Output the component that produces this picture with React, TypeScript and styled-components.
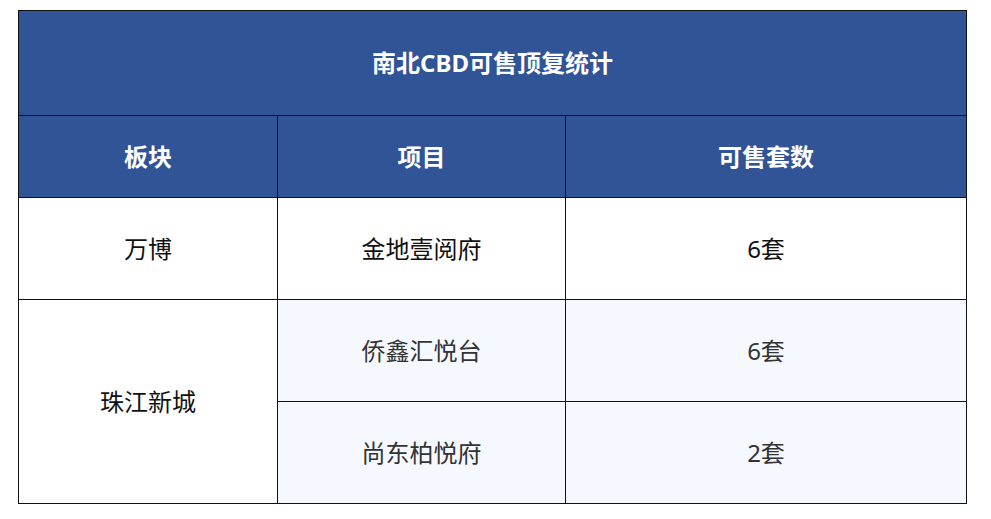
import React from 'react';
import styled, { createGlobalStyle } from 'styled-components';

type Row = {
  area?: string;
  span?: number;
  project: string;
  count: string;
  striped?: boolean;
};

const rows: Row[] = [
  { area: '万博', span: 1, project: '金地壹阅府', count: '6套' },
  { area: '珠江新城', span: 2, project: '侨鑫汇悦台', count: '6套', striped: true },
  { project: '尚东柏悦府', count: '2套', striped: true },
];

const GlobalStyle = createGlobalStyle`
  body {
    margin: 0;
    background: #fff;
    font-family: "Noto Sans", "Noto Sans CJK SC", sans-serif;
  }
`;

export default function App() {
  return (
    <>
      <GlobalStyle />
      <Page>
        <Table>
          <colgroup>
            <col style={{ width: 259 }} />
            <col style={{ width: 288 }} />
            <col style={{ width: 401 }} />
          </colgroup>
          <thead>
            <TitleRow>
              <HeadCell colSpan={3}>南北CBD可售顶复统计</HeadCell>
            </TitleRow>
            <HeaderRow>
              <HeadCell>板块</HeadCell>
              <HeadCell>项目</HeadCell>
              <HeadCell>可售套数</HeadCell>
            </HeaderRow>
          </thead>
          <tbody>
            {rows.map((row) => (
              <BodyRow key={row.project}>
                {row.area && <Cell rowSpan={row.span}>{row.area}</Cell>}
                <Cell striped={row.striped}>{row.project}</Cell>
                <Cell striped={row.striped}>{row.count}</Cell>
              </BodyRow>
            ))}
          </tbody>
        </Table>
      </Page>
    </>
  );
}

const Page = styled.div`
  padding: 10px 0 0 18px;
`;

const Table = styled.table`
  width: 948px;
  border-collapse: collapse;
  table-layout: fixed;
  border: 1px solid #111;
`;

const TitleRow = styled.tr`
  height: 105px;
`;

const HeaderRow = styled.tr`
  height: 82px;
`;

const BodyRow = styled.tr`
  height: 102px;
`;

const HeadCell = styled.th`
  padding: 0 0 3px;
  border: 1px solid #111;
  background: #305495;
  color: #fff;
  font-size: 24px;
  font-weight: 700;
  text-align: center;
  vertical-align: middle;
`;

const Cell = styled.td<{ striped?: boolean }>`
  padding: 0 0 3px;
  border: 1px solid #111;
  background: ${({ striped }) => (striped ? '#f5f9ff' : '#fff')};
  color: ${({ striped }) => (striped ? '#333' : '#111')};
  font-size: 24px;
  text-align: center;
  vertical-align: middle;
`;
